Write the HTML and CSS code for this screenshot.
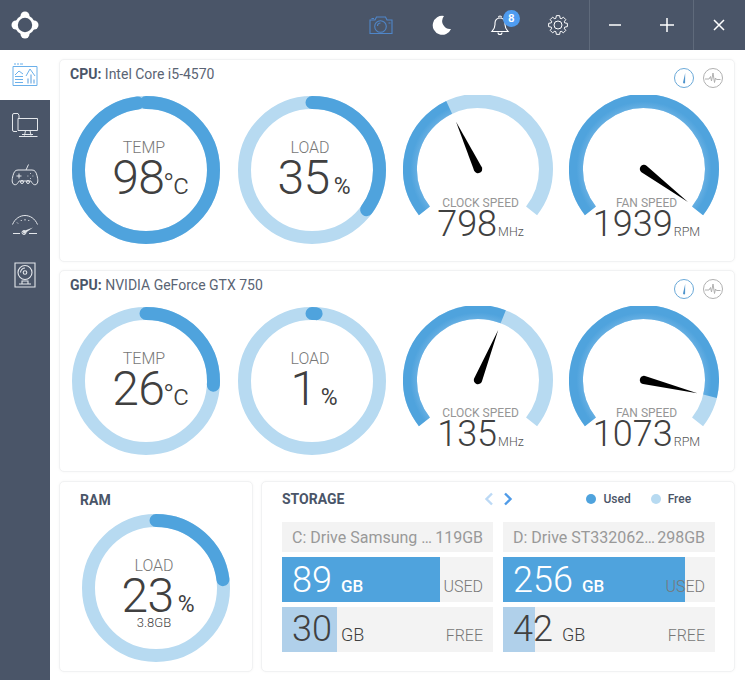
FILE: index.html
```html
<!DOCTYPE html>
<html lang="en">
<head>
<meta charset="utf-8">
<title>Hardware monitor</title>
<link rel="stylesheet" href="styles.css">
</head>
<body>
<svg class="defs" width="0" height="0" aria-hidden="true"><defs>
  <radialGradient id="arcShade" gradientUnits="userSpaceOnUse" cx="75" cy="74" r="75">
    <stop offset="0.8" stop-color="#68b0e3"/><stop offset="0.9" stop-color="#4fa3dd"/><stop offset="1" stop-color="#4fa3dd"/>
  </radialGradient>
</defs></svg>
<div class="app">
  <header class="topbar">
    <div class="logo">
      <svg width="30" height="30" viewBox="0 0 30 30"><g fill="#fff"><circle cx="15" cy="15" r="10"/><circle cx="15" cy="6" r="4.500"/><circle cx="15" cy="24" r="4.500"/><circle cx="6" cy="15" r="4.500"/><circle cx="24" cy="15" r="4.500"/></g><circle cx="15" cy="15" r="7.200" fill="#4a5568"/></svg>
    </div>
    <div class="topbar-tools">
      <button class="tool tool-camera">
        <svg width="24" height="20" viewBox="0 0 24 20" fill="none" stroke="#4f86c9" stroke-width="1.100"><path d="M1 5h5l1.500-3h9L18 5h5v13.500H1z"/><circle cx="11.500" cy="11.500" r="5.800"/><path d="M8.500 11a3 3 0 0 1 3-3M2.500 3.500h2.500M19.500 8h2"/></svg>
      </button>
      <button class="tool tool-moon">
        <svg width="20" height="20" viewBox="0 0 20 20"><path fill="#fff" d="M12 1A9.500 9.500 0 1 0 19 14A8 8 0 0 1 12 1Z"/></svg>
      </button>
      <button class="tool tool-bell">
        <svg width="20" height="22" viewBox="0 0 20 22" fill="none" stroke="#fff" stroke-width="1.100"><path d="M2 17.500c1.500-1.500 3-3 3-7V9c0-3 2-5 5-5s5 2 5 5v1.500c0 4 1.500 5.500 3 7z"/><path d="M8.500 3.500a1.500 1.500 0 0 1 3 0M8 18.500a2 2 0 0 0 4 0"/></svg>
        <span class="badge">8</span>
      </button>
      <button class="tool tool-gear">
        <svg width="20" height="20" viewBox="0 0 20 20" fill="none" stroke="#fff" stroke-width="1" stroke-linejoin="round"><circle cx="10" cy="10" r="4"/><path d="M7.840 3.340L8.350.640H11.650L12.160 3.340L13.180 3.760L15.450 2.220L17.780 4.550L16.240 6.820L16.660 7.840L19.360 8.350V11.650L16.660 12.160L16.240 13.180L17.780 15.450L15.450 17.780L13.180 16.240L12.160 16.660L11.650 19.360H8.350L7.840 16.660L6.820 16.240L4.550 17.780L2.220 15.450L3.760 13.180L3.340 12.160L.640 11.650V8.350L3.340 7.840L3.760 6.820L2.220 4.550L4.550 2.220L6.820 3.760Z"/></svg>
      </button>
    </div>
    <div class="window-group">
      <button class="win"><svg width="12" height="12" viewBox="0 0 12 12"><path d="M0 6h12" stroke="#fff" stroke-width="1.500"/></svg></button>
      <button class="win"><svg width="14" height="14" viewBox="0 0 14 14"><path d="M0 7h14M7 0v14" stroke="#fff" stroke-width="1.500"/></svg></button>
    </div>
    <div class="window-group">
      <button class="win"><svg width="12" height="12" viewBox="0 0 12 12"><path d="M1 1l10 10M11 1L1 11" stroke="#fff" stroke-width="1.500"/></svg></button>
    </div>
  </header>

  <div class="body-row">
    <nav class="sidebar">
      <a class="nav-item nav-active">
        <svg width="28" height="24" viewBox="0 0 28 24" fill="none" stroke="#6bb0ea" stroke-width="1"><path d="M2 3.500h24v19H2z"/><path d="M3 1h2M6 1h2M9 1h3" /><path d="M4 12l4-4 4 3M4 13.500h8M4 16.500h8M4 19.500h8"/><path d="M15 13l4-7 5 7"/><path fill="#a9cdee" stroke="none" d="M16 20.500v-5h2v5zM19 20.500v-9h2v9zM22 20.500v-4h2v4z"/></svg>
      </a>
      <a class="nav-item nav-pc">
        <svg width="28" height="26" viewBox="0 0 28 26" fill="none" stroke="#e4e7eb" stroke-width="1"><path d="M6 19.500H3A1.500 1.500 0 0 1 1.500 18V3A1.500 1.500 0 0 1 3 1.500h4l1 2V6"/><path d="M7 6.500h19.500v12H7z"/><path d="M14.500 18.500l-1 5M19 18.500l1 5M8 24.500h18.500M11 22.500h11"/></svg>
      </a>
      <a class="nav-item nav-pad">
        <svg width="28" height="24" viewBox="0 0 28 24" fill="none" stroke="#e4e7eb" stroke-width="1"><path d="M15 7l2.500-5.500"/><path d="M7 7h14c3 0 4 2 5 5.500 1 4 1.500 7.500-1 9-2.500 1-4-1.500-5-3.500H8c-1 2-2.500 4.500-5 3.500-2.500-1.500-2-5-1-9C3 9 4 7 7 7z"/><path d="M8 10.500v5M5.500 13h5M19 10.500h.8M21.500 13h.8M16.500 13h.8M19 15.500h.8"/><circle cx="11" cy="19" r="1.500"/><circle cx="17" cy="19" r="1.500"/></svg>
      </a>
      <a class="nav-item nav-speed">
        <svg width="28" height="22" viewBox="0 0 28 22" fill="none" stroke="#e4e7eb" stroke-width="1"><path d="M1.500 10.500C4 4.500 9 1.500 14 1.500s10 3 12.500 9"/><path d="M6 8.500l1 1M10 6l.5 1M14 5v1.500M18 6l-.5 1"/><path stroke-width="1.200" d="M2 19.500h7M18 19.500h8"/><path fill="#e4e7eb" stroke="none" d="M11.500 17.500L22 13.500l-9 6.500z"/><circle cx="13" cy="18.500" r="2"/></svg>
      </a>
      <a class="nav-item nav-hdd">
        <svg width="22" height="26" viewBox="0 0 22 26" fill="none" stroke="#e4e7eb" stroke-width="1.100"><path d="M1 1h20v24H1z"/><circle cx="11" cy="10.500" r="7"/><circle cx="11" cy="10.500" r="1.800"/><path d="M6.500 10.500a4.500 4.500 0 0 1 4.500-4.500M5 22h12M8 22v-3h6v3"/></svg>
      </a>
    </nav>

    <main class="content">
      <section class="card card-device">
        <div class="card-head">
          <h2 class="device-title"><b>CPU:</b> Intel Core i5-4570</h2>
          <div class="mode-icons">
            <span class="mode"><svg width="20" height="20" viewBox="0 0 20 20" fill="none"><circle cx="10" cy="10" r="9.500" stroke="#6aa9d8"/><path d="M11.200 5L9 14.500a1.200 1.200 0 0 0 2.100.5z" fill="#4f94cc"/></svg></span>
            <span class="mode"><svg width="20" height="20" viewBox="0 0 20 20" fill="none" stroke="#b0b0b0"><circle cx="10" cy="10" r="9.500"/><path d="M2 11h4l1.500-2.500 1 4.500 1.500-8 1.500 9.500 1-4.500 1 1.500h4"/></svg></span>
          </div>
        </div>
        <div class="meters">
          <div class="meter">
            <svg class="dial" width="150" height="150" viewBox="0 0 150 150"><circle class="track" cx="75" cy="75" r="67.500"/><circle class="value round" cx="75" cy="75" r="67.500" pathLength="100" stroke-dasharray="98 100" transform="rotate(-90 75 75)"/></svg>
            <div class="readout"><span class="label">TEMP</span><span class="num num-temp"><span class="big">98</span><span class="unit unit-c">°c</span></span></div>
          </div>
          <div class="meter">
            <svg class="dial" width="150" height="150" viewBox="0 0 150 150"><circle class="track" cx="75" cy="75" r="67.500"/><circle class="value round" cx="75" cy="75" r="67.500" pathLength="100" stroke-dasharray="35 100" transform="rotate(-90 75 75)"/></svg>
            <div class="readout"><span class="label">LOAD</span><span class="num"><span class="big">35</span><span class="unit unit-p">%</span></span></div>
          </div>
          <div class="meter">
            <svg class="dial" width="150" height="150" viewBox="0 0 150 150"><circle class="arc-track" cx="75" cy="74" r="68" pathLength="100" stroke-dasharray="71.100 100" transform="rotate(142 75 74)"/><circle class="arc-value" stroke="url(#arcShade)" cx="75" cy="74" r="68" pathLength="100" stroke-dasharray="28.600 100" transform="rotate(142 75 74)"/><path class="needle" d="M0-52L4.200 0A4.200 4.200 0 1 1-4.200 0Z" transform="translate(75 74) rotate(-25)"/></svg>
            <div class="speed"><span class="speed-label">CLOCK SPEED</span><span class="speed-num"><span class="speed-big">798</span><span class="speed-unit">MHz</span></span></div>
          </div>
          <div class="meter">
            <svg class="dial" width="150" height="150" viewBox="0 0 150 150"><circle class="arc-track" cx="75" cy="74" r="68" pathLength="100" stroke-dasharray="71.100 100" transform="rotate(142 75 74)"/><circle class="arc-value" stroke="url(#arcShade)" cx="75" cy="74" r="68" pathLength="100" stroke-dasharray="71.100 100" transform="rotate(142 75 74)"/><path class="needle" d="M0-55L4.200 0A4.200 4.200 0 1 1-4.200 0Z" transform="translate(75 74) rotate(127)"/></svg>
            <div class="speed"><span class="speed-label">FAN SPEED</span><span class="speed-num"><span class="speed-big">1939</span><span class="speed-unit">RPM</span></span></div>
          </div>
        </div>
      </section>

      <section class="card card-device">
        <div class="card-head">
          <h2 class="device-title"><b>GPU:</b> NVIDIA GeForce GTX 750</h2>
          <div class="mode-icons">
            <span class="mode"><svg width="20" height="20" viewBox="0 0 20 20" fill="none"><circle cx="10" cy="10" r="9.500" stroke="#6aa9d8"/><path d="M11.200 5L9 14.500a1.200 1.200 0 0 0 2.100.5z" fill="#4f94cc"/></svg></span>
            <span class="mode"><svg width="20" height="20" viewBox="0 0 20 20" fill="none" stroke="#b0b0b0"><circle cx="10" cy="10" r="9.500"/><path d="M2 11h4l1.500-2.500 1 4.500 1.500-8 1.500 9.500 1-4.500 1 1.500h4"/></svg></span>
          </div>
        </div>
        <div class="meters">
          <div class="meter">
            <svg class="dial" width="150" height="150" viewBox="0 0 150 150"><circle class="track" cx="75" cy="75" r="67.500"/><circle class="value round" cx="75" cy="75" r="67.500" pathLength="100" stroke-dasharray="26 100" transform="rotate(-90 75 75)"/></svg>
            <div class="readout"><span class="label">TEMP</span><span class="num num-temp"><span class="big">26</span><span class="unit unit-c">°c</span></span></div>
          </div>
          <div class="meter">
            <svg class="dial" width="150" height="150" viewBox="0 0 150 150"><circle class="track" cx="75" cy="75" r="67.500"/><circle class="value round" cx="75" cy="75" r="67.500" pathLength="100" stroke-dasharray="1 100" transform="rotate(-90 75 75)"/></svg>
            <div class="readout"><span class="label">LOAD</span><span class="num"><span class="big">1</span><span class="unit unit-p">%</span></span></div>
          </div>
          <div class="meter">
            <svg class="dial" width="150" height="150" viewBox="0 0 150 150"><circle class="arc-track" cx="75" cy="74" r="68" pathLength="100" stroke-dasharray="71.100 100" transform="rotate(142 75 74)"/><circle class="arc-value" stroke="url(#arcShade)" cx="75" cy="74" r="68" pathLength="100" stroke-dasharray="41.600 100" transform="rotate(142 75 74)"/><path class="needle" d="M0-54L4.200 0A4.200 4.200 0 1 1-4.200 0Z" transform="translate(75 74) rotate(22)"/></svg>
            <div class="speed"><span class="speed-label">CLOCK SPEED</span><span class="speed-num"><span class="speed-big">135</span><span class="speed-unit">MHz</span></span></div>
          </div>
          <div class="meter">
            <svg class="dial" width="150" height="150" viewBox="0 0 150 150"><circle class="arc-track" cx="75" cy="74" r="68" pathLength="100" stroke-dasharray="71.100 100" transform="rotate(142 75 74)"/><circle class="arc-value" stroke="url(#arcShade)" cx="75" cy="74" r="68" pathLength="100" stroke-dasharray="64.400 100" transform="rotate(142 75 74)"/><path class="needle" d="M0-55L4.200 0A4.200 4.200 0 1 1-4.200 0Z" transform="translate(75 74) rotate(104)"/></svg>
            <div class="speed"><span class="speed-label">FAN SPEED</span><span class="speed-num"><span class="speed-big">1073</span><span class="speed-unit">RPM</span></span></div>
          </div>
        </div>
      </section>

      <div class="bottom-row">
        <section class="card card-ram">
          <h2 class="section-title ram-title">RAM</h2>
          <div class="meter">
            <svg class="dial" width="150" height="150" viewBox="0 0 150 150"><circle class="track" cx="75" cy="75" r="67.500"/><circle class="value round" cx="75" cy="75" r="67.500" pathLength="100" stroke-dasharray="23 100" transform="rotate(-90 75 75)"/></svg>
            <div class="readout"><span class="label">LOAD</span><span class="num"><span class="big">23</span><span class="unit unit-p">%</span></span><span class="ram-size">3.8GB</span></div>
          </div>
        </section>

        <section class="card card-storage">
          <div class="storage-head">
            <h2 class="section-title">STORAGE</h2>
            <div class="pager">
              <svg width="10" height="14" viewBox="0 0 10 14" fill="none" stroke="#bcd9f5" stroke-width="2.400"><path d="M8 1.500L2.500 7 8 12.500"/></svg>
              <svg width="10" height="14" viewBox="0 0 10 14" fill="none" stroke="#4f9be8" stroke-width="2.400"><path d="M2 1.500L7.500 7 2 12.500"/></svg>
            </div>
            <div class="legend">
              <span class="legend-item"><i class="dot dot-used"></i>Used</span>
              <span class="legend-item"><i class="dot dot-free"></i>Free</span>
            </div>
          </div>
          <div class="drives">
            <div class="drive">
              <div class="drive-name"><span>C: Drive Samsung …</span><span>119GB</span></div>
              <div class="bar"><div class="fill fill-used" style="width:158px"></div><div class="bar-text on-used"><span class="bar-num">89</span><span class="bar-gb">GB</span><span class="bar-tag">USED</span></div></div>
              <div class="bar"><div class="fill fill-free" style="width:55px"></div><div class="bar-text"><span class="bar-num">30</span><span class="bar-gb">GB</span><span class="bar-tag">FREE</span></div></div>
            </div>
            <div class="drive">
              <div class="drive-name"><span>D: Drive ST332062…</span><span>298GB</span></div>
              <div class="bar"><div class="fill fill-used" style="width:182px"></div><div class="bar-text on-used"><span class="bar-num">256</span><span class="bar-gb">GB</span><span class="bar-tag">USED</span></div></div>
              <div class="bar"><div class="fill fill-free" style="width:32px"></div><div class="bar-text"><span class="bar-num">42</span><span class="bar-gb">GB</span><span class="bar-tag">FREE</span></div></div>
            </div>
          </div>
        </section>
      </div>
    </main>
  </div>
</div>
</body>
</html>
```
FILE: styles.css
```css
* { box-sizing: border-box; }
html, body { margin: 0; height: 100%; }
body { font-family: Roboto, "Liberation Sans", sans-serif; background: #fff; color: #444; overflow: hidden; }
.defs { display: block; height: 0; }
.app { width: 745px; height: 680px; display: flex; flex-direction: column; }

.topbar { height: 50px; flex: none; background: #4a5568; display: flex; align-items: stretch; }
.logo { width: 51px; display: flex; align-items: center; justify-content: center; }
.topbar-tools { margin-left: 301px; display: flex; width: 237px; }
.tool { position: relative; width: 58px; border: 0; padding: 0; background: none; display: flex; align-items: center; justify-content: center; }
.tool-moon { margin-left: 3px; }
.badge { position: absolute; left: 32px; top: 10px; width: 17px; height: 17px; border-radius: 50%; background: #4f9cf0; color: #fff; font-size: 11px; font-weight: 700; line-height: 17px; text-align: center; }
.window-group { display: flex; border-left: 1px solid #5f6a7b; }
.win { width: 51.500px; border: 0; padding: 0; background: none; display: flex; align-items: center; justify-content: center; }

.body-row { flex: 1; display: flex; min-height: 0; }
.sidebar { width: 50px; flex: none; background: #4a5568; display: flex; flex-direction: column; }
.nav-item { height: 50px; display: flex; align-items: center; justify-content: center; }
.nav-active { background: #fff; }
.nav-item svg { display: block; }

.content { flex: 1; padding: 9px 10px 8px 9px; display: flex; flex-direction: column; gap: 8px; background: #fff; }
.card { background: #fff; border: 1px solid #f1f2f3; border-radius: 5px; box-shadow: 0 0 3px rgba(0,0,0,.04); }
.card-device { height: 203px; flex: none; }
.card-device + .card-device { height: 202px; }
.card-head { height: 35px; padding: 5px 11px 0 10px; display: flex; justify-content: space-between; }
.device-title { margin: 0; font-size: 14px; line-height: 18px; font-weight: 400; color: #5a6474; }
.device-title b { font-weight: 700; color: #4a5568; }
.mode-icons { display: flex; gap: 9px; padding-top: 3px; }
.mode { display: block; width: 20px; height: 20px; }
.mode svg { display: block; }

.meters { display: grid; grid-template-columns: repeat(4, 166px); padding-left: 3px; }
.meter { position: relative; width: 166px; height: 150px; display: flex; justify-content: center; }
.dial { display: block; }
.track { fill: none; stroke: #b7daf1; stroke-width: 13; }
.value { fill: none; stroke: #4fa3dd; stroke-width: 13; }
.round { stroke-linecap: round; }
.arc-track { fill: none; stroke: #b7daf1; stroke-width: 14; }
.arc-value { fill: none; stroke-width: 14; }
.needle { fill: #000; }

.readout { position: absolute; left: 0; right: 0; top: 43px; display: flex; flex-direction: column; align-items: center; }
.label { font-size: 16px; font-weight: 300; line-height: 19px; color: #777; margin-left: -4px; }
.num { display: flex; align-items: baseline; line-height: 44px; height: 44px; margin: -1px 0 0 4px; color: #404040; }
.num-temp { margin-left: 8px; }
.big { font-size: 48px; font-weight: 300; letter-spacing: -.5px; }
.unit { font-weight: 300; }
.unit-c { font-size: 30px; margin-left: -1.500px; letter-spacing: -1px; }
.unit-p { font-size: 23px; margin-left: 4px; font-weight: 400; }
.ram-size { font-size: 13px; font-weight: 300; line-height: 14px; color: #444; margin: -2px 0 0 -4px; }

.speed { position: absolute; left: 0; right: 0; top: 101px; display: flex; flex-direction: column; align-items: center; padding-left: 5px; }
.card-device + .card-device .speed { top: 100px; }
.speed-label { font-size: 12px; line-height: 15px; color: #969696; }
.speed-num { display: flex; align-items: baseline; height: 30px; line-height: 30px; margin-top: -2px; }
.speed-big { font-size: 36px; font-weight: 300; color: #404040; }
.speed-unit { font-size: 12.500px; font-weight: 300; color: #555; margin-left: 1px; }

.bottom-row { flex: 1; display: flex; gap: 8px; min-height: 0; margin-top: 1px; }
.section-title { margin: 0; font-size: 14px; line-height: 18px; font-weight: 700; color: #4a5568; }
.card-ram { width: 194px; flex: none; }
.ram-title { padding: 9px 0 0 20px; }
.card-ram .meter { width: 192px; margin-top: 4px; }

.card-storage { flex: 1; padding: 8px 19px 0 20px; }
.storage-head { display: flex; align-items: center; height: 18px; }
.pager { margin-left: 140px; display: flex; gap: 9px; }
.legend { margin-left: 73px; display: flex; gap: 20px; }
.legend-item { display: flex; align-items: center; gap: 7px; font-size: 12px; font-weight: 500; color: #4a5568; }
.dot { width: 10px; height: 10px; border-radius: 50%; display: block; }
.dot-used { background: #4fa3dd; }
.dot-free { background: #b7daf1; }

.drives { display: grid; grid-template-columns: 211px 212px; gap: 10px; margin-top: 14px; }
.drive { display: flex; flex-direction: column; gap: 5px; }
.drive-name { height: 30px; background: #f3f3f3; padding: 0 10px; display: flex; align-items: center; justify-content: space-between; font-size: 16px; font-weight: 400; color: #999; white-space: nowrap; }
.bar { height: 45px; background: #f3f3f3; display: grid; }
.fill, .bar-text { grid-area: 1 / 1; }
.fill { height: 45px; }
.fill-used { background: #4fa3dd; }
.fill-free { background: #b0d0ea; }
.bar-text { padding: 0 10px; display: flex; align-items: baseline; color: #404040; }
.on-used { padding-top: 1px; }
.bar-num { font-size: 36px; font-weight: 300; line-height: 44px; }
.bar-gb { font-size: 18px; font-weight: 300; margin-left: 9px; }
.bar-tag { margin-left: auto; font-size: 16px; font-weight: 300; color: #777; }
.on-used .bar-num, .on-used .bar-gb { color: #fff; }
.on-used .bar-gb { font-size: 17px; font-weight: 500; }
```
